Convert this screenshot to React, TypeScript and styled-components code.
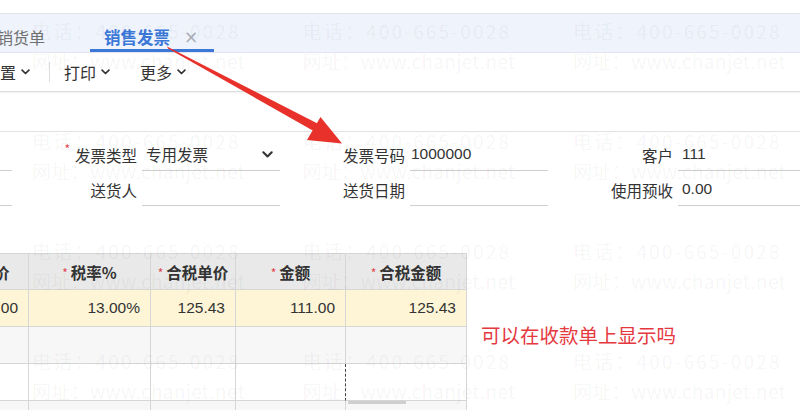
import React from "react";
import styled, { createGlobalStyle } from "styled-components";

const GlobalStyle = createGlobalStyle`
  html, body { margin: 0; padding: 0; background: #fff; }
  body { font-family: "Liberation Sans", "Noto Sans CJK SC", sans-serif; color: #333; }
  * { box-sizing: border-box; }
`;

const CJK = `"Noto Sans CJK SC", "Liberation Sans", sans-serif`;

const Page = styled.div`
  position: relative;
  width: 800px;
  height: 410px;
  overflow: hidden;
  background: #fff;
`;

const TopStrip = styled.div`
  height: 14px;
  border-bottom: 1px solid #dfe2e8;
`;

const TabBar = styled.div`
  height: 39px;
  background: #eef3fc;
  border-bottom: 1px solid #e2e6ee;
  display: flex;
  align-items: stretch;
`;

const Tab = styled.div<{ $active?: boolean; $lead?: number }>`
  display: flex;
  align-items: flex-end;
  gap: 14px;
  margin-left: ${(p) => p.$lead ?? 0}px;
  padding: 0 16px 2px 14px;
  font-family: ${CJK};
  font-size: ${(p) => (p.$active ? 16.5 : 16)}px;
  line-height: 20px;
  color: ${(p) => (p.$active ? "#3b78d8" : "#707070")};
  font-weight: ${(p) => (p.$active ? 700 : 400)};
  border-bottom: 3px solid ${(p) => (p.$active ? "#3b78d8" : "transparent")};
`;

const PlainTab = styled(Tab)`
  padding: 0 0 2px 0;
`;

const Close = styled.span`
  font-family: "DejaVu Sans", sans-serif;
  font-weight: 400;
  font-size: 17px;
  color: #a9adb5;
`;

const Toolbar = styled.div`
  height: 39px;
  display: flex;
  align-items: center;
  border-bottom: 1px solid #dcdcdc;
  box-shadow: 0 1px 2px rgba(0, 0, 0, 0.06);
  font-family: ${CJK};
  font-size: 16px;
  color: #333;
`;

const ToolItem = styled.div<{ $lead: number }>`
  display: flex;
  align-items: center;
  gap: 5px;
  margin-left: ${(p) => p.$lead}px;
`;

const ToolDivider = styled.div`
  width: 1px;
  height: 20px;
  background: #dddddd;
  margin-left: 19px;
`;

const Spacer = styled.div`
  height: 40px;
  border-bottom: 1px solid #e2e2e2;
`;

const Form = styled.div`
  display: grid;
  grid-template-columns: 12px 130px 138px 130px 138px 130px 1fr;
  grid-auto-rows: 35px;
  padding-top: 4px;
  font-size: 15.5px;
`;

const Label = styled.div`
  display: flex;
  align-items: flex-end;
  justify-content: flex-end;
  padding: 0 5px 6px 0;
  font-family: ${CJK};
  line-height: 20px;
  color: #333;
  white-space: nowrap;
`;

const Req = styled.span`
  color: #e0464f;
  font-size: 12px;
  line-height: 12px;
  align-self: center;
  margin: 0 5px 4px 0;
`;

const Field = styled.div<{ $pad?: number }>`
  display: flex;
  align-items: flex-end;
  justify-content: space-between;
  padding: 0 4px 6px ${(p) => p.$pad ?? 4}px;
  border-bottom: 1px solid #cfcfcf;
  line-height: 20px;
  font-family: "Liberation Sans", "Noto Sans CJK SC", sans-serif;
  color: #333;
  white-space: nowrap;
`;

const CjkValue = styled.span`
  font-family: ${CJK};
`;

const Main = styled.div`
  display: flex;
  align-items: flex-start;
  margin-top: 47px;
`;

const Table = styled.div`
  margin-left: -71px;
  border-top: 1px solid #d6d6d6;
  flex: none;
`;

const Row = styled.div<{ $bg: string; $h: number }>`
  display: grid;
  grid-template-columns: 100px 122px 85px 110px 121px;
  height: ${(p) => p.$h}px;
  background: ${(p) => p.$bg};
`;

const Cell = styled.div<{ $head?: boolean; $dashed?: boolean }>`
  position: relative;
  display: flex;
  align-items: center;
  justify-content: ${(p) => (p.$head ? "center" : "flex-end")};
  padding-right: ${(p) => (p.$head ? 0 : 10)}px;
  border-right: 1px ${(p) => (p.$dashed ? "dashed #444" : "solid #d6d6d6")};
  border-bottom: 1px solid #d6d6d6;
  font-family: ${(p) => (p.$head ? CJK : `"Liberation Sans", sans-serif`)};
  font-weight: ${(p) => (p.$head ? 700 : 400)};
  font-size: 15.5px;
  color: #333;
  white-space: nowrap;
`;

const HeadReq = styled.span`
  color: #e0464f;
  font-weight: 400;
  font-size: 12px;
  margin-right: 3px;
  align-self: flex-start;
  margin-top: 10px;
`;

const ScrollThumb = styled.div`
  position: absolute;
  left: 2px;
  top: 0;
  width: 58px;
  height: 3px;
  background: #cfcfcf;
`;

const Note = styled.div`
  margin: 70px 0 0 14px;
  font-family: ${CJK};
  font-size: 19.5px;
  line-height: 24px;
  color: #e5393f;
  white-space: nowrap;
`;

const Watermarks = styled.div`
  position: absolute;
  inset: 0;
  pointer-events: none;
  display: grid;
  grid-template-columns: repeat(3, 270.5px);
  grid-auto-rows: 110px;
  padding: 16px 0 0 32px;
`;

const Mark = styled.div`
  font-family: ${CJK};
  font-size: 19px;
  line-height: 30px;
  color: rgba(0, 0, 0, 0.05);
  white-space: nowrap;
`;

const MarkLine = styled.div<{ $spacing: number }>`
  letter-spacing: ${(p) => p.$spacing}px;
`;

const Overlay = styled.svg`
  position: absolute;
  left: 0;
  top: 0;
  pointer-events: none;
`;

const Chevron = ({ size = 9 }: { size?: number }) => (
  <svg width={size} height={size * 0.65} viewBox="0 0 10 6.5">
    <polyline
      points="1.2,1.2 5,5 8.8,1.2"
      fill="none"
      stroke="#333"
      strokeWidth="1.9"
      strokeLinecap="round"
      strokeLinejoin="round"
    />
  </svg>
);

const SelectChevron = styled.span`
  display: flex;
  margin: 0 3px 6px 0;
`;

const headers = [
  { t: "无税单价", r: false },
  { t: "税率%", r: true },
  { t: "合税单价", r: true },
  { t: "金额", r: true },
  { t: "合税金额", r: true },
];

const values = ["111.00", "13.00%", "125.43", "111.00", "125.43"];

export default function App() {
  const marks = Array.from({ length: 12 });
  return (
    <Page>
      <GlobalStyle />
      <TopStrip />
      <TabBar>
        <PlainTab $lead={-3}>销货单</PlainTab>
        <Tab $active $lead={45}>
          <span>销售发票</span>
          <Close>×</Close>
        </Tab>
      </TabBar>
      <Toolbar>
        <ToolItem $lead={0}>
          <span>置</span>
          <Chevron />
        </ToolItem>
        <ToolDivider />
        <ToolItem $lead={14}>
          <span>打印</span>
          <Chevron />
        </ToolItem>
        <ToolItem $lead={30}>
          <span>更多</span>
          <Chevron />
        </ToolItem>
      </Toolbar>
      <Spacer />
      <Form>
        <Field />
        <Label>
          <Req>*</Req>发票类型
        </Label>
        <Field>
          <CjkValue>专用发票</CjkValue>
          <SelectChevron>
            <Chevron size={11} />
          </SelectChevron>
        </Field>
        <Label>发票号码</Label>
        <Field $pad={1}>1000000</Field>
        <Label>客户</Label>
        <Field>111</Field>

        <Field />
        <Label>送货人</Label>
        <Field />
        <Label>送货日期</Label>
        <Field />
        <Label>使用预收</Label>
        <Field>0.00</Field>
      </Form>
      <Main>
        <Table>
          <Row $bg="#e9e9e9" $h={36}>
            {headers.map((h) => (
              <Cell $head key={h.t}>
                {h.r && <HeadReq>*</HeadReq>}
                {h.t}
              </Cell>
            ))}
          </Row>
          <Row $bg="#fdf5d6" $h={37}>
            {values.map((v, i) => (
              <Cell key={i}>{v}</Cell>
            ))}
          </Row>
          <Row $bg="#f7f7f7" $h={37}>
            {values.map((_, i) => (
              <Cell key={i} />
            ))}
          </Row>
          <Row $bg="#ffffff" $h={37}>
            {values.map((_, i) => (
              <Cell key={i} $dashed={i === 3} />
            ))}
          </Row>
          <Row $bg="#f7f7f7" $h={37}>
            {values.map((_, i) => (
              <Cell key={i}>{i === 4 && <ScrollThumb />}</Cell>
            ))}
          </Row>
        </Table>
        <Note>可以在收款单上显示吗</Note>
      </Main>

      <Watermarks>
        {marks.map((_, i) => (
          <Mark key={i}>
            <MarkLine $spacing={2.2}>电话：400-665-0028</MarkLine>
            <MarkLine $spacing={0.3}>网址：www.chanjet.net</MarkLine>
          </Mark>
        ))}
      </Watermarks>

      <Overlay width="800" height="410" viewBox="0 0 800 410">
        <polygon points="167,46.5 168,48.5 314.5,131.5 318.5,124" fill="#e8312b" />
        <polygon points="342,143.5 307,140 320.5,117" fill="#e8312b" />
      </Overlay>
    </Page>
  );
}
